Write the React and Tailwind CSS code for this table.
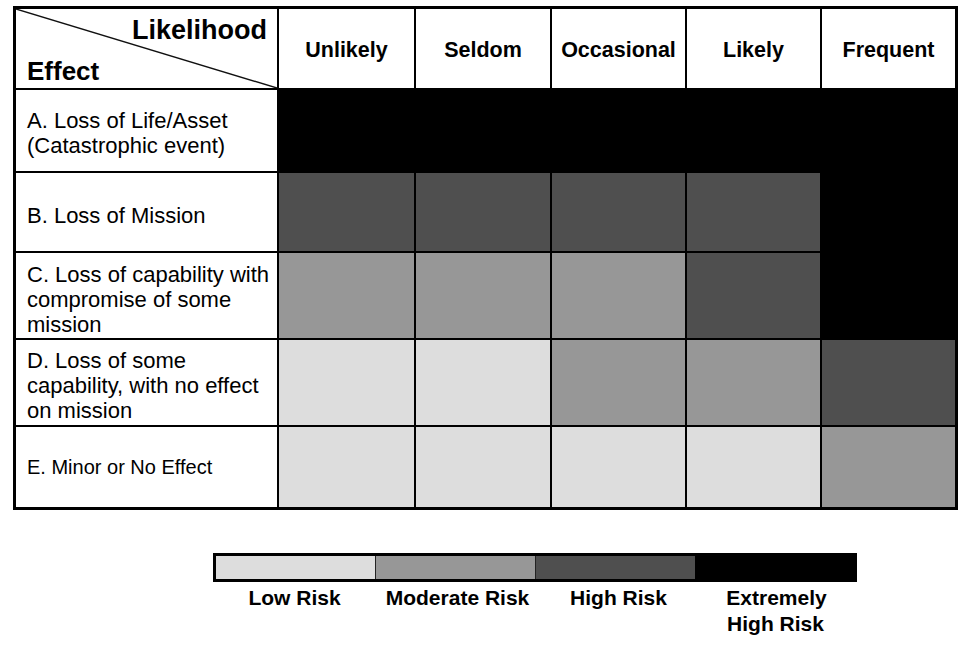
import React from "react";

const FONT = { fontFamily: '"Liberation Sans", Arial, Helvetica, sans-serif' };

const LOW = "bg-[#dddddd]";
const MOD = "bg-[#979797]";
const HIGH = "bg-[#4f4f4f]";
const EXT = "bg-black";

const cols = ["Unlikely", "Seldom", "Occasional", "Likely", "Frequent"];

const rows = [
  {
    label: ["A. Loss of Life/Asset", "(Catastrophic event)"],
    cells: [EXT, EXT, EXT, EXT, EXT],
    cls: "text-[22px] pt-[5px]",
  },
  {
    label: ["B. Loss of Mission"],
    cells: [HIGH, HIGH, HIGH, HIGH, EXT],
    cls: "text-[22px] pt-[7px]",
  },
  {
    label: ["C. Loss of capability with", "compromise of some", "mission"],
    cells: [MOD, MOD, MOD, HIGH, EXT],
    cls: "text-[22px] pt-[8px]",
  },
  {
    label: ["D. Loss of some", "capability, with no effect", "on mission"],
    cells: [LOW, LOW, MOD, MOD, HIGH],
    cls: "text-[22px] pt-[5px]",
  },
  {
    label: ["E. Minor or No Effect"],
    cells: [LOW, LOW, LOW, LOW, MOD],
    cls: "text-[20px] pt-[1px]",
  },
];

export default function App() {
  return (
    <div className="w-[966px] h-[654px] bg-white text-black overflow-hidden" style={FONT}>
      <div className="pl-[13px] pt-[6px]">
        <div className="w-[945px] border-[3px] border-black bg-black grid grid-cols-[261px_135px_134px_133px_133px_133px] grid-rows-[79px_81px_78px_85px_85px_80px] gap-[2px]">
          {/* corner header */}
          <div className="relative bg-white flex flex-col justify-between pt-[8px] pb-[4px]">
            <svg
              className="absolute inset-0 w-full h-full"
              viewBox="0 0 261 79"
              preserveAspectRatio="none"
            >
              <line x1="0" y1="0" x2="261" y2="79" stroke="#111" strokeWidth="1.4" />
            </svg>
            <div className="relative text-right pr-[10px] text-[27px] leading-[27px] font-bold">
              Likelihood
            </div>
            <div className="relative pl-[11px] text-[26px] leading-[26px] font-bold">
              Effect
            </div>
          </div>
          {cols.map((c) => (
            <div
              key={c}
              className="bg-white flex items-center justify-center pt-[4px] text-[21.5px] font-bold"
            >
              {c}
            </div>
          ))}
          {rows.map((r, i) => (
            <React.Fragment key={i}>
              <div className={`bg-white flex flex-col justify-center pl-[11px] leading-[25px] ${r.cls}`}>
                {r.label.map((l, j) => (
                  <div key={j} className="whitespace-nowrap">
                    {l}
                  </div>
                ))}
              </div>
              {r.cells.map((c, j) => (
                <div key={j} className={c} />
              ))}
            </React.Fragment>
          ))}
        </div>
      </div>

      {/* Legend */}
      <div className="ml-[213px] mt-[43px] w-[644px]">
        <div className="h-[29px] border-[3px] border-black flex">
          <div className="w-[159px] bg-[#dddddd]" />
          <div className="w-[160px] bg-[#979797] border-l border-[#222]" />
          <div className="w-[160px] bg-[#4f4f4f] border-l border-[#222]" />
          <div className="flex-1 bg-black" />
        </div>
        <div className="mt-[3px] grid grid-cols-4 text-[21px] leading-[26px] font-bold text-center">
          <div className="pl-[2px]">Low Risk</div>
          <div className="pl-[6px]">Moderate Risk</div>
          <div className="pl-[6px]">High Risk</div>
          <div>
            Extremely
            <br />
            <span className="pr-[2px]">High Risk</span>
          </div>
        </div>
      </div>
    </div>
  );
}
